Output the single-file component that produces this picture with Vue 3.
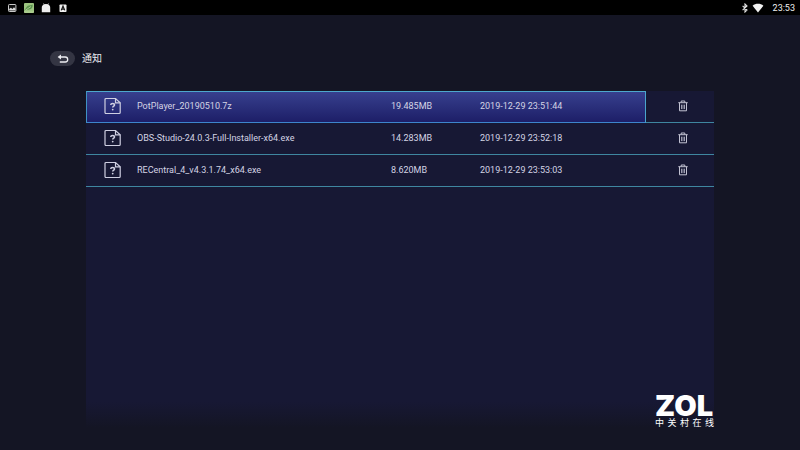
<script setup>
import { ref } from 'vue'

const files = ref([
  { name: 'PotPlayer_20190510.7z', size: '19.485MB', time: '2019-12-29 23:51:44' },
  { name: 'OBS-Studio-24.0.3-Full-Installer-x64.exe', size: '14.283MB', time: '2019-12-29 23:52:18' },
  { name: 'RECentral_4_v4.3.1.74_x64.exe', size: '8.620MB', time: '2019-12-29 23:53:03' },
])
const selected = ref(0)

function removeFile(index) {
  files.value.splice(index, 1)
}
</script>

<template>
  <div class="screen">
    <header class="status">
      <div class="status-group apps">
        <svg class="app-icon" viewBox="0 0 10 10" aria-hidden="true">
          <rect x="1.5" y="1.5" width="7.4" height="7" rx="0.8" fill="#111" stroke="#c9c9c9" />
          <path d="M2.2 7.6V6l1.7-1.3 1.5 1.2L7 4.2l1.4 1.5v1.9z" fill="#dedede" />
        </svg>
        <svg class="app-icon" viewBox="0 0 10 10" aria-hidden="true">
          <rect width="10" height="10" rx="1" fill="#9cc480" />
          <path d="M.5 6.800C2 6 2 3 5 2.400c2-.5 3-.2 3.700-.9C8.900 4 8 6.200 5.300 6.600 3.500 6.900 2 6.800.5 7.800z" fill="#5c944e" />
          <path d="M1 7.500 7 3.500M0 9h10" stroke="#c3d9a5" stroke-width="0.700" />
        </svg>
        <svg class="app-icon" viewBox="0 0 10 10" aria-hidden="true">
          <path d="M.8 9.300V4.600C.8 3 1.600 2 2.800 1.500L2.200.4l.4-.2.800 1a5 5 0 0 1 3.200 0l.8-1 .4.2-.6 1.100C8.400 2 9.200 3 9.200 4.600v4.700z" fill="#ededed" />
        </svg>
        <svg class="app-icon" viewBox="0 0 10 10" aria-hidden="true">
          <rect x="1.500" y="1.500" width="7" height="7.500" rx="0.800" fill="#f0f0f0" />
          <path d="M3.200 7.400 5 3l1.800 4.400M3.900 6.100h2.200" fill="none" stroke="#111" stroke-width="1.100" />
        </svg>
      </div>
      <div class="status-group">
        <svg class="bluetooth" viewBox="0 0 6 10" aria-hidden="true">
          <path d="M.6 2.900 5 7.100 3 9V1l2 1.900L.6 7.100" fill="none" stroke="#e4e4e4" stroke-width="1.100" />
        </svg>
        <svg class="wifi" viewBox="0 0 12 10" aria-hidden="true">
          <path d="M.6 2.800C3.500.2 8.500.2 11.400 2.800L6 9.600z" fill="#f2f2f2" />
        </svg>
        <time class="clock">23:53</time>
      </div>
    </header>

    <div class="heading">
      <button class="back" type="button" aria-label="返回">
        <svg viewBox="0 0 12 10" aria-hidden="true">
          <path d="M2.500 3h5.700a2.500 2.500 0 0 1 0 5H2.800" fill="none" stroke="#ededf2" stroke-width="1.300" />
          <path d="M.6 3 4 .4v5.200z" fill="#ededf2" />
        </svg>
      </button>
      <h1>通知</h1>
    </div>

    <main class="panel">
      <table>
        <colgroup>
          <col class="col-icon" />
          <col />
          <col class="col-size" />
          <col class="col-time" />
          <col class="col-delete" />
        </colgroup>
        <tbody>
          <tr
            v-for="(file, index) in files"
            :key="file.name"
            :class="{ selected: index === selected }"
            @click="selected = index"
          >
            <td class="icon-cell">
              <svg class="file-icon" viewBox="0 0 18 18" aria-hidden="true">
                <path d="M2 1.500h9.500l4.700 4.300v9.700a1 1 0 0 1-1 1H2a1 1 0 0 1-1-1v-13a1 1 0 0 1 1-1z" />
                <path d="M11.500 1.500v4.300h4.700" />
                <path class="mark" d="M6.700 8c.1-1.100.8-1.600 1.900-1.600 1.200 0 1.900.6 1.900 1.500 0 1.200-1.800 1.300-1.800 2.700" />
                <circle cx="8.700" cy="12.600" r="0.900" />
              </svg>
            </td>
            <td>{{ file.name }}</td>
            <td>{{ file.size }}</td>
            <td class="time-cell">{{ file.time }}</td>
            <td class="delete-cell">
              <button class="delete" type="button" aria-label="删除" @click.stop="removeFile(index)">
                <svg viewBox="0 0 10 12" aria-hidden="true">
                  <path d="M.3 2.700h9.400M3.200 2.500V1h3.600v1.500M1.500 2.700v8.100h7V2.700" />
                  <path class="slats" d="M3.500 4.700v4.400M5 4.700v4.400M6.500 4.700v4.400" />
                </svg>
              </button>
            </td>
          </tr>
        </tbody>
      </table>
    </main>

    <div class="watermark">
      <div class="brand">ZOL</div>
      <div class="brand-name">中关村在线</div>
    </div>
  </div>
</template>

<style>
body {
  margin: 0;
  background: #141524;
}
</style>

<style scoped>
.screen {
  position: relative;
  box-sizing: border-box;
  display: flex;
  flex-direction: column;
  min-height: 100vh;
  padding-bottom: 22px;
  background: #141524;
  color: #d4d4e4;
  font-family: Roboto, "Noto Sans CJK SC", sans-serif;
  font-size: 9px;
}

.status {
  display: flex;
  justify-content: space-between;
  align-items: center;
  height: 15px;
  padding: 0 5px 0 7px;
  background: #000;
}

.status-group {
  display: flex;
  align-items: center;
}

.apps {
  gap: 7px;
}

.app-icon {
  width: 10px;
  height: 10px;
}

.bluetooth {
  width: 6px;
  height: 10px;
  margin-right: 4px;
}

.wifi {
  width: 12px;
  height: 10px;
  margin-right: 9px;
}

.clock {
  color: #f0f0f0;
  line-height: 16px;
}

.heading {
  display: flex;
  align-items: center;
  gap: 7px;
  padding: 35px 50px 0;
}

.back {
  display: flex;
  align-items: center;
  justify-content: center;
  width: 25px;
  height: 15px;
  padding: 0;
  border: 0;
  border-radius: 8px;
  background: #343543;
}

.back svg {
  width: 12px;
  height: 10px;
}

h1 {
  margin: 0;
  color: #ececf2;
  font-size: 10px;
  font-weight: 400;
  line-height: 17px;
}

.panel {
  flex: 1;
  margin: 24px 86px 0;
  background: linear-gradient(to top, #141524, #171834 26px);
}

table {
  width: 100%;
  border-spacing: 0;
  table-layout: fixed;
}

.col-icon {
  width: 51px;
}

.col-size {
  width: 89px;
}

.col-time {
  width: 166px;
}

.col-delete {
  width: 68px;
}

td {
  box-sizing: border-box;
  height: 32px;
  padding: 0 0 2px;
  border-top: 1px solid transparent;
  border-bottom: 1px solid #3f86a0;
  line-height: 12px;
  white-space: nowrap;
}

.selected td:not(.delete-cell) {
  border-top-color: #4da8cc;
  border-bottom-color: #3d85cc;
  background: linear-gradient(#38418f, #1c1d66) border-box;
}

.selected .icon-cell {
  border-left-color: #4092c4;
}

.selected .time-cell {
  border-right: 1px solid #4aa5cc;
}

.icon-cell {
  padding-left: 17px;
  border-left: 1px solid transparent;
  border-image: none;
}

tr:not(.selected) .icon-cell {
  padding-left: 18px;
  border-left: 0;
}

.file-icon {
  display: block;
  width: 18px;
  height: 18px;
  fill: none;
  stroke: #cfcfe2;
  stroke-width: 1.2;
}

.file-icon .mark {
  stroke-width: 1.5;
}

.file-icon circle {
  fill: #cfcfe2;
  stroke: none;
}

.delete {
  display: block;
  width: 10px;
  height: 12px;
  margin: 0 auto 0 32px;
  padding: 0;
  border: 0;
  background: none;
}

.delete svg {
  display: block;
  width: 10px;
  height: 12px;
  fill: none;
  stroke: #c2c2d2;
}

.delete .slats {
  stroke-width: 0.8;
}

.watermark {
  position: absolute;
  right: 86px;
  bottom: 22px;
  width: 59px;
  color: #fff;
}

.brand {
  font-family: Inter, sans-serif;
  font-size: 29px;
  font-weight: 900;
  line-height: 24px;
}

.brand-name {
  font-size: 9px;
  line-height: 10px;
  text-align-last: justify;
}
</style>
